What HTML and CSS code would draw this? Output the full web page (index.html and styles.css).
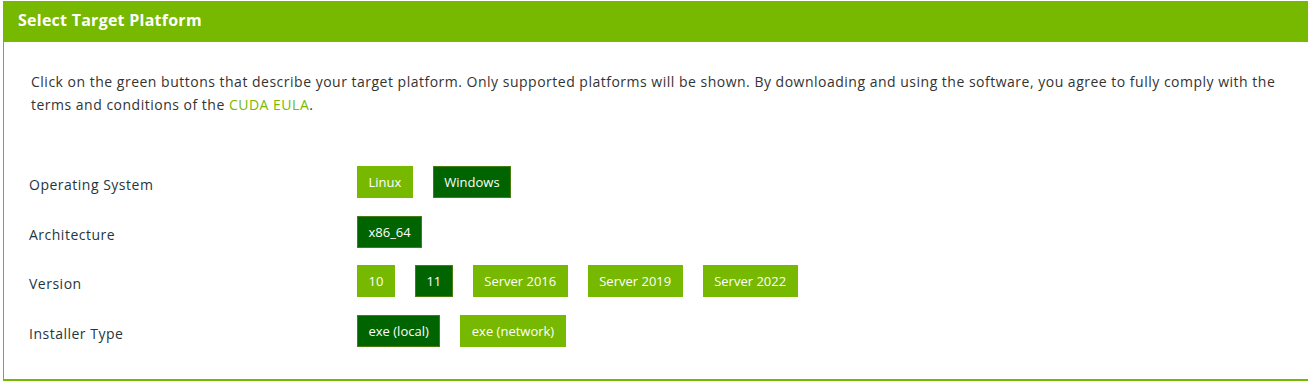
FILE: index.html
```html
<!DOCTYPE html>
<html>
<head>
<meta charset="utf-8">
<link rel="stylesheet" href="styles.css">
</head>
<body>
<div class="panel">
  <div class="panel-header">Select Target Platform</div>
  <div class="panel-body">
    <p class="intro">Click on the green buttons that describe your target platform. Only supported platforms will be shown. By downloading and using the software, you agree to fully comply with the terms and conditions of the <a href="#" class="link">CUDA EULA</a>.</p>
    <div class="selector">
      <div class="row">
        <div class="label">Operating System</div>
        <div class="options">
          <span class="btn">Linux</span>
          <span class="btn active">Windows</span>
        </div>
      </div>
      <div class="row">
        <div class="label">Architecture</div>
        <div class="options">
          <span class="btn active">x86_64</span>
        </div>
      </div>
      <div class="row">
        <div class="label">Version</div>
        <div class="options">
          <span class="btn">10</span>
          <span class="btn active">11</span>
          <span class="btn">Server 2016</span>
          <span class="btn">Server 2019</span>
          <span class="btn">Server 2022</span>
        </div>
      </div>
      <div class="row">
        <div class="label">Installer Type</div>
        <div class="options">
          <span class="btn active">exe (local)</span>
          <span class="btn">exe (network)</span>
        </div>
      </div>
    </div>
  </div>
</div>
</body>
</html>
```

FILE: styles.css
```css
html, body {
  margin: 0;
  padding: 0;
  background: #ffffff;
}
body {
  padding: 1px 0 0 3px;
  font-family: "Open Sans", "Liberation Sans", sans-serif;
}
.panel {
  border-left: 1px solid #76b900;
  border-bottom: 2px solid #76b900;
  height: 380px;
  box-sizing: border-box;
}
.panel-header {
  background: #76b900;
  color: #ffffff;
  font-weight: 700;
  font-size: 16px;
  letter-spacing: 0.25px;
  height: 41px;
  line-height: 39px;
  padding-left: 14px;
}
.panel-body {
  padding: 28px 0 0 25px;
}
.intro {
  margin: 0;
  font-size: 14px;
  letter-spacing: 0.5px;
  line-height: 23px;
  color: #333333;
  padding-left: 2px;
  padding-right: 20px;
}
.link {
  color: #76b900;
  text-decoration: none;
}
.selector {
  margin-top: 50px;
  display: flex;
  flex-direction: column;
  gap: 17.5px;
}
.row {
  display: flex;
  align-items: flex-start;
}
.label {
  width: 328px;
  flex: none;
  font-size: 14px;
  letter-spacing: 0.5px;
  color: #1f3640;
  padding-top: 10px;
  line-height: 18px;
}
.options {
  display: flex;
  gap: 20px;
}
.btn {
  display: inline-block;
  box-sizing: border-box;
  height: 32px;
  line-height: 30px;
  padding: 0 10.5px;
  font-size: 13px;
  color: #ffffff;
  background: #76b900;
  border: 1px solid #76b900;
}
.btn.active {
  background: #006400;
  border-color: #4a7d10;
}
```
